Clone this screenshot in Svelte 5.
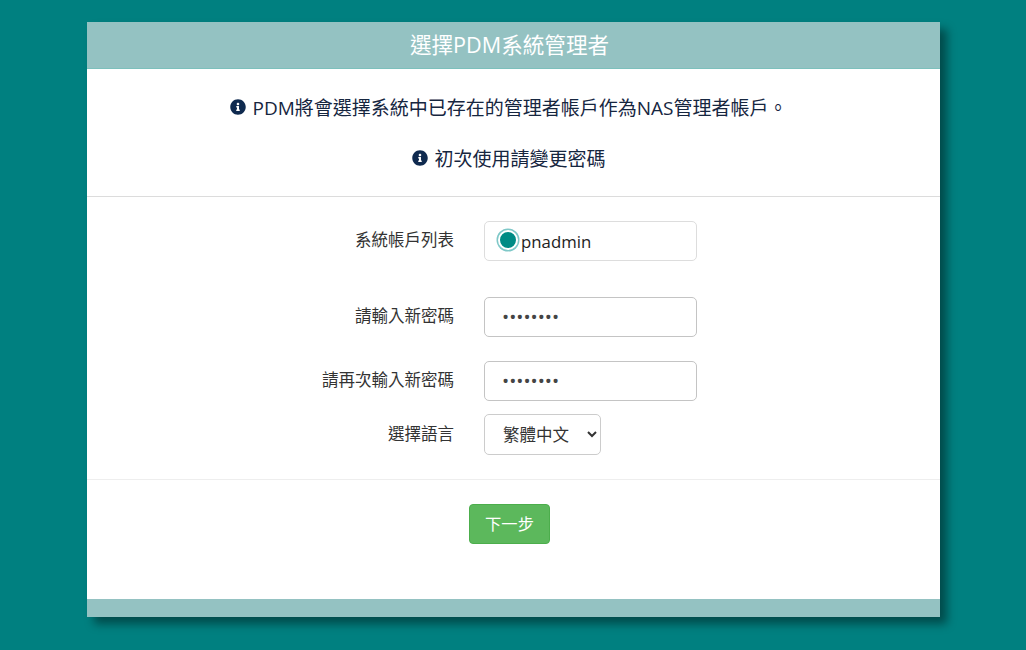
<script>
	let account = $state("pnadmin");
	let pw1 = $state("password");
	let pw2 = $state("password");
	let lang = $state("zh-TW");

	const notices = [
		"PDM將會選擇系統中已存在的管理者帳戶作為NAS管理者帳戶。",
		"初次使用請變更密碼"
	];
</script>

<div class="page">
	<div class="card">
		<div class="head">選擇PDM系統管理者</div>
		<div class="notices">
			{#each notices as text}
				<p>
					<svg class="info" viewBox="0 0 512 512" aria-hidden="true"><path d="M256 8C119.043 8 8 119.083 8 256c0 136.997 111.043 248 248 248s248-111.003 248-248C504 119.083 392.957 8 256 8zm0 110c23.196 0 42 18.804 42 42s-18.804 42-42 42-42-18.804-42-42 18.804-42 42-42zm56 254c0 6.627-5.373 12-12 12h-88c-6.627 0-12-5.373-12-12v-24c0-6.627 5.373-12 12-12h12v-64h-12c-6.627 0-12-5.373-12-12v-24c0-6.627 5.373-12 12-12h64c6.627 0 12 5.373 12 12v100h12c6.627 0 12 5.373 12 12v24z"/></svg>
					<span>{text}</span>
				</p>
			{/each}
		</div>
		<form class="form" onsubmit={(e) => e.preventDefault()}>
			<div class="row first">
				<span class="label">系統帳戶列表</span>
				<label class="box">
					<input type="radio" name="account" value="pnadmin" bind:group={account} />
					<span>pnadmin</span>
				</label>
			</div>
			<div class="row second">
				<label class="label" for="pw1">請輸入新密碼</label>
				<input id="pw1" class="box text" type="password" bind:value={pw1} />
			</div>
			<div class="row third">
				<label class="label" for="pw2">請再次輸入新密碼</label>
				<input id="pw2" class="box text" type="password" bind:value={pw2} />
			</div>
			<div class="row fourth">
				<label class="label" for="lang">選擇語言</label>
				<select id="lang" class="select" bind:value={lang}>
					<option value="zh-TW">繁體中文</option>
					<option value="en">English</option>
				</select>
			</div>
		</form>
		<div class="actions">
			<button type="button" class="next">下一步</button>
		</div>
		<div class="foot"></div>
	</div>
</div>

<style>
	:global(body) {
		background: #008080;
	}

	.page {
		height: 650px;
		padding: 22px 86px 0 87px;
		box-sizing: border-box;
		font-family: "Open Sans", "Noto Sans CJK TC", sans-serif;
	}

	.card {
		height: 595px;
		background: #fff;
		display: flex;
		flex-direction: column;
		box-shadow: 7px 7px 9px rgba(0, 0, 0, 0.42);
	}

	.head {
		height: 47px;
		box-sizing: border-box;
		background: #94c2c2;
		border-bottom: 1px solid #7cc0bc;
		padding-right: 8px;
		color: #fff;
		font-size: 21.6px;
		line-height: 46px;
		text-align: center;
	}

	.notices {
		height: 128px;
		box-sizing: border-box;
		padding: 12px 9px 0 0;
		border-bottom: 1px solid #dcdcdc;
	}

	.notices p {
		margin: 0;
		height: 51px;
		display: flex;
		align-items: center;
		justify-content: center;
		gap: 6px;
		font-size: 19px;
		color: #16263f;
	}

	.info {
		width: 16px;
		height: 16px;
		fill: #0f2a4f;
		flex: none;
	}

	.form {
		height: 283px;
		box-sizing: border-box;
		padding-top: 24px;
		border-bottom: 1px solid #eeeeee;
	}

	.row {
		display: grid;
		grid-template-columns: 367px auto;
		column-gap: 30px;
		align-items: center;
		justify-content: start;
	}

	.second {
		margin-top: 36px;
	}

	.third {
		margin-top: 24px;
	}

	.fourth {
		margin-top: 13px;
	}

	.label {
		text-align: right;
		font-size: 16.5px;
		line-height: 1;
		margin-top: -1px;
		color: #333;
	}

	.box {
		width: 213px;
		height: 40px;
		box-sizing: border-box;
		border: 1px solid #ddd;
		border-radius: 5px;
		background: #fff;
		display: flex;
		align-items: center;
		padding-left: 13px;
		font-size: 16.8px;
		color: #222;
	}

	.box input {
		appearance: none;
		width: 20px;
		height: 20px;
		margin: 0 3px 2px 0;
		border-radius: 50%;
		background: #008b85;
		border: 2px solid #fff;
		box-shadow: 0 0 0 1.5px #7fc8c8;
		box-sizing: border-box;
	}

	.text {
		border: 1px solid #c4c4c4;
		padding: 0 17px;
		font-family: inherit;
		font-size: 19px;
		color: #444;
		outline: none;
	}

	.select {
		width: 117px;
		height: 41px;
		box-sizing: border-box;
		border: 1px solid #ccc;
		border-radius: 5px;
		background: #fff;
		padding: 0 14px;
		font-family: inherit;
		font-size: 16.5px;
		color: #333;
	}

	.actions {
		flex: 1;
		display: flex;
		justify-content: center;
		align-items: flex-start;
		padding: 24px 8px 0 0;
	}

	.next {
		width: 81px;
		height: 40px;
		padding: 0 0 2px;
		background: #5cb85c;
		border: 1px solid #4cae4c;
		border-radius: 4px;
		color: #fff;
		font-family: inherit;
		font-size: 16.3px;
	}

	.foot {
		height: 18px;
		background: #94c2c2;
	}
</style>
